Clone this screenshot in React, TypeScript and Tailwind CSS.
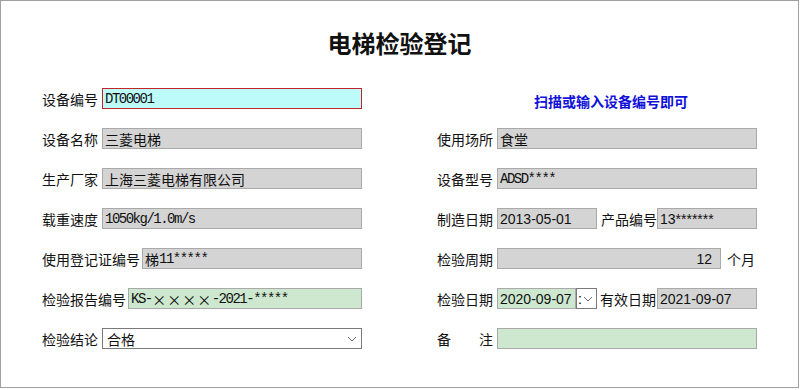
import React from 'react'

const cjk = "font-['Noto_Sans_CJK_SC',sans-serif]"
const mono = "font-['Liberation_Mono','Noto_Sans_CJK_SC',monospace] text-[14px] leading-[16px] tracking-[-1.5px]"
const sans = "font-['Liberation_Sans','Noto_Sans_CJK_SC',sans-serif] text-[14px] leading-[16px]"

function Chevron() {
    return (
        <svg width="10" height="6" viewBox="0 0 10 6" className="shrink-0">
            <path d="M1 1 L5 5 L9 1" fill="none" stroke="#6b6b6b" strokeWidth="1" />
        </svg>
    )
}

function Label({ children, className = '' }: { children: React.ReactNode; className?: string }) {
    return <span className={`text-[14px] leading-[16px] text-[#111] whitespace-nowrap ${className}`}>{children}</span>
}

type Tone = 'gray' | 'green' | 'cyan'

function Field({ tone = 'gray', className = '', children }: { tone?: Tone; className?: string; children?: React.ReactNode }) {
    const tones = {
        gray: 'bg-[#d4d4d4] border-[#a9a9a9]',
        green: 'bg-[#cde8cf] border-[#a9a9a9]',
        cyan: 'bg-[#bdfbfb] border-[#c0262c]',
    }
    return (
        <div className={`h-[21px] border flex items-center pl-[2px] text-[#111] whitespace-nowrap overflow-hidden ${tones[tone]} ${className}`}>
            {children}
        </div>
    )
}

function Row({ children }: { children: React.ReactNode }) {
    return <div className="h-[21px] flex items-center">{children}</div>
}

export default function App() {
    return (
        <div className={`w-[800px] h-[390px] bg-white ${cjk}`}>
            <div className="w-[799px] h-[388px] border border-[#a0a0a0]">
                <h1 className="pt-[28px] text-center text-[24px] leading-[28px] font-bold text-[#111]">电梯检验登记</h1>

                <div className="mt-[31px] pl-[41px] grid grid-cols-[320px_320px] gap-x-[75px] gap-y-[19px]">
                    {/* row 1 */}
                    <Row>
                        <Label className="mr-[4px]">设备编号</Label>
                        <Field tone="cyan" className="flex-1">
                            <span className={mono}>DT00001</span>
                        </Field>
                    </Row>
                    <div className="h-[21px] pl-[97px]">
                        <span className="text-[14px] leading-[16px] font-bold text-[#1010d8]">扫描或输入设备编号即可</span>
                    </div>

                    {/* row 2 */}
                    <Row>
                        <Label className="mr-[4px]">设备名称</Label>
                        <Field className="flex-1">
                            <span className="text-[14px] leading-[16px]">三菱电梯</span>
                        </Field>
                    </Row>
                    <Row>
                        <Label className="mr-[4px]">使用场所</Label>
                        <Field className="flex-1">
                            <span className="text-[14px] leading-[16px]">食堂</span>
                        </Field>
                    </Row>

                    {/* row 3 */}
                    <Row>
                        <Label className="mr-[4px]">生产厂家</Label>
                        <Field className="flex-1">
                            <span className="text-[14px] leading-[16px]">上海三菱电梯有限公司</span>
                        </Field>
                    </Row>
                    <Row>
                        <Label className="mr-[4px]">设备型号</Label>
                        <Field className="flex-1">
                            <span className={mono}>ADSD****</span>
                        </Field>
                    </Row>

                    {/* row 4 */}
                    <Row>
                        <Label className="mr-[4px]">载重速度</Label>
                        <Field className="flex-1">
                            <span className={mono}>1050kg/1.0m/s</span>
                        </Field>
                    </Row>
                    <Row>
                        <Label className="mr-[4px]">制造日期</Label>
                        <Field className="w-[100px]">
                            <span className={sans}>2013-05-01</span>
                        </Field>
                        <Label className="ml-[4px]">产品编号</Label>
                        <Field className="flex-1">
                            <span className={sans}>13*******</span>
                        </Field>
                    </Row>

                    {/* row 5 */}
                    <Row>
                        <Label className="mr-[2px]">使用登记证编号</Label>
                        <Field className="flex-1">
                            <span className="text-[14px] leading-[16px]">梯</span>
                            <span className={mono}>11*****</span>
                        </Field>
                    </Row>
                    <Row>
                        <Label className="mr-[4px]">检验周期</Label>
                        <Field className="w-[224px] justify-end pr-[8px]">
                            <span className={sans}>12</span>
                        </Field>
                        <Label className="ml-[6px]">个月</Label>
                    </Row>

                    {/* row 6 */}
                    <Row>
                        <Label className="mr-[2px]">检验报告编号</Label>
                        <Field tone="green" className="flex-1">
                            <span className={mono}>KS-</span>
                            {['×', '×', '×', '×'].map((x, i) => (
                                <span key={i} className="inline-block w-[15px] text-center text-[14px] leading-[16px]">{x}</span>
                            ))}
                            <span className={mono}>-2021-*****</span>
                        </Field>
                    </Row>
                    <Row>
                        <Label className="mr-[4px]">检验日期</Label>
                        <Field tone="green" className="w-[79px]">
                            <span className={sans}>2020-09-07</span>
                        </Field>
                        <div className="w-[21px] h-[21px] border border-[#7a7a7a] bg-white flex items-center pl-[1px] gap-[1px]">
                            <span className={sans}>:</span>
                            <Chevron />
                        </div>
                        <Label className="ml-[3px] mr-[1px]">有效日期</Label>
                        <Field className="flex-1">
                            <span className={sans}>2021-09-07</span>
                        </Field>
                    </Row>

                    {/* row 7 */}
                    <Row>
                        <Label className="mr-[4px]">检验结论</Label>
                        <div className="flex-1 h-[21px] border border-[#7a7a7a] bg-white flex items-center justify-between pl-[4px] pr-[4px]">
                            <span className="text-[14px] leading-[16px] text-[#111]">合格</span>
                            <Chevron />
                        </div>
                    </Row>
                    <Row>
                        <div className="w-[56px] mr-[4px] flex justify-between">
                            <Label>备</Label>
                            <Label>注</Label>
                        </div>
                        <Field tone="green" className="flex-1" />
                    </Row>
                </div>
            </div>
        </div>
    )
}
